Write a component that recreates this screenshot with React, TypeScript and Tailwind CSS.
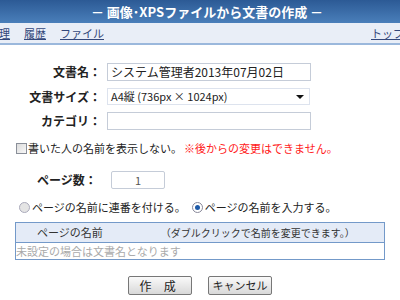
const font = { fontFamily: '"Noto Sans CJK JP", "Noto Sans", sans-serif' };

const App = () => {
  return (
    <div className="w-[400px] h-[300px] overflow-hidden bg-white text-[11px] leading-none text-[#222]" style={font}>
      {/* header */}
      <div className="h-[23px] bg-gradient-to-b from-[#2c5a95] to-[#4a7fba] flex items-center justify-center">
        <span className="text-white font-bold text-[13px] whitespace-nowrap ml-[14px]">－ 画像･XPSファイルから文書の作成 －</span>
      </div>

      {/* nav */}
      <div className="h-[22px] bg-[#e9eef7] border-b-2 border-[#9bb8dc] flex items-center justify-between text-[11px] text-[#33477a] whitespace-nowrap">
        <div className="flex gap-[14px] -ml-[12px]">
          <span className="underline">管理</span>
          <span className="underline">履歴</span>
          <span className="underline">ファイル</span>
        </div>
        <span className="underline -mr-[4px]">トップ</span>
      </div>

      {/* form */}
      <div className="pt-[18px] flex flex-col gap-[7px]">
        <div className="flex items-center">
          <span className="w-[104px] text-right font-bold pr-[3px] text-[12px]">文書名：</span>
          <div className="ml-[3px] w-[204px] h-[18px] border border-[#c5ccd8] flex items-center px-[3px] text-[12px]">
            システム管理者2013年07月02日
          </div>
        </div>
        <div className="flex items-center">
          <span className="w-[104px] text-right font-bold pr-[3px] text-[12px]">文書サイズ：</span>
          <div className="ml-[3px] w-[203px] h-[17px] border border-[#dde3ee] flex items-center justify-between px-[3px]">
            <span>A4縦 (736px × 1024px)</span>
            <span className="w-0 h-0 border-l-[4px] border-r-[4px] border-t-[4px] border-l-transparent border-r-transparent border-t-[#111] mr-[2px]" />
          </div>
        </div>
        <div className="flex items-center">
          <span className="w-[104px] text-right font-bold pr-[3px] text-[12px]">カテゴリ：</span>
          <div className="ml-[3px] w-[204px] h-[18px] border border-[#c5ccd8]" />
        </div>
      </div>

      <div className="mt-[13px] ml-[16px] flex items-center text-[11px] whitespace-nowrap">
        <span className="w-[11px] h-[11px] border border-[#8a8f99] bg-gradient-to-br from-[#dcdcdc] to-[#f8f8f8] mr-[1px]" />
        <span>書いた人の名前を表示しない。</span>
        <span className="text-[#ff2020] ml-[2px]">※後からの変更はできません。</span>
      </div>

      <div className="mt-[17px] flex items-center">
        <span className="ml-[37px] w-[74px] font-bold text-[12px]">ページ数：</span>
        <div className="w-[54px] h-[18px] border border-[#c5ccd8] rounded-[2px] flex items-center justify-center text-[#555]">1</div>
      </div>

      <div className="mt-[13px] ml-[19px] flex items-center text-[11px] whitespace-nowrap">
        <span className="w-[11px] h-[11px] rounded-full border border-[#aab] bg-[#e4e4e4] mr-[2px]" />
        <span>ページの名前に連番を付ける。</span>
        <span className="w-[11px] h-[11px] rounded-full border border-[#889] bg-white flex items-center justify-center ml-[6px] mr-[2px]">
          <span className="w-[5px] h-[5px] rounded-full bg-[#1e5aa8]" />
        </span>
        <span>ページの名前を入力する。</span>
      </div>

      <div className="mt-[9px] mx-[15px] w-[370px] border border-[#7399c9] whitespace-nowrap">
        <div className="h-[20px] bg-[#e4ebf7] border-b border-[#7399c9] flex items-center text-[#333]">
          <span className="ml-[21px] shrink-0">ページの名前</span>
          <span className="ml-[58px] shrink-0 text-[10px]">（ダブルクリックで名前を変更できます。）</span>
        </div>
        <div className="h-[16px] flex items-center text-[#aaa]">未設定の場合は文書名となります</div>
      </div>

      <div className="mt-[16px] flex justify-center gap-[16px]">
        <button className="w-[64px] h-[19px] border border-[#777] rounded-[2px] bg-gradient-to-b from-[#fafafa] to-[#d8d8d8] text-[12px] tracking-[0.4em]">作 成</button>
        <button className="w-[64px] h-[19px] border border-[#777] rounded-[2px] bg-gradient-to-b from-[#fafafa] to-[#d8d8d8] text-[11px]">キャンセル</button>
      </div>
    </div>
  );
};

export default App;
